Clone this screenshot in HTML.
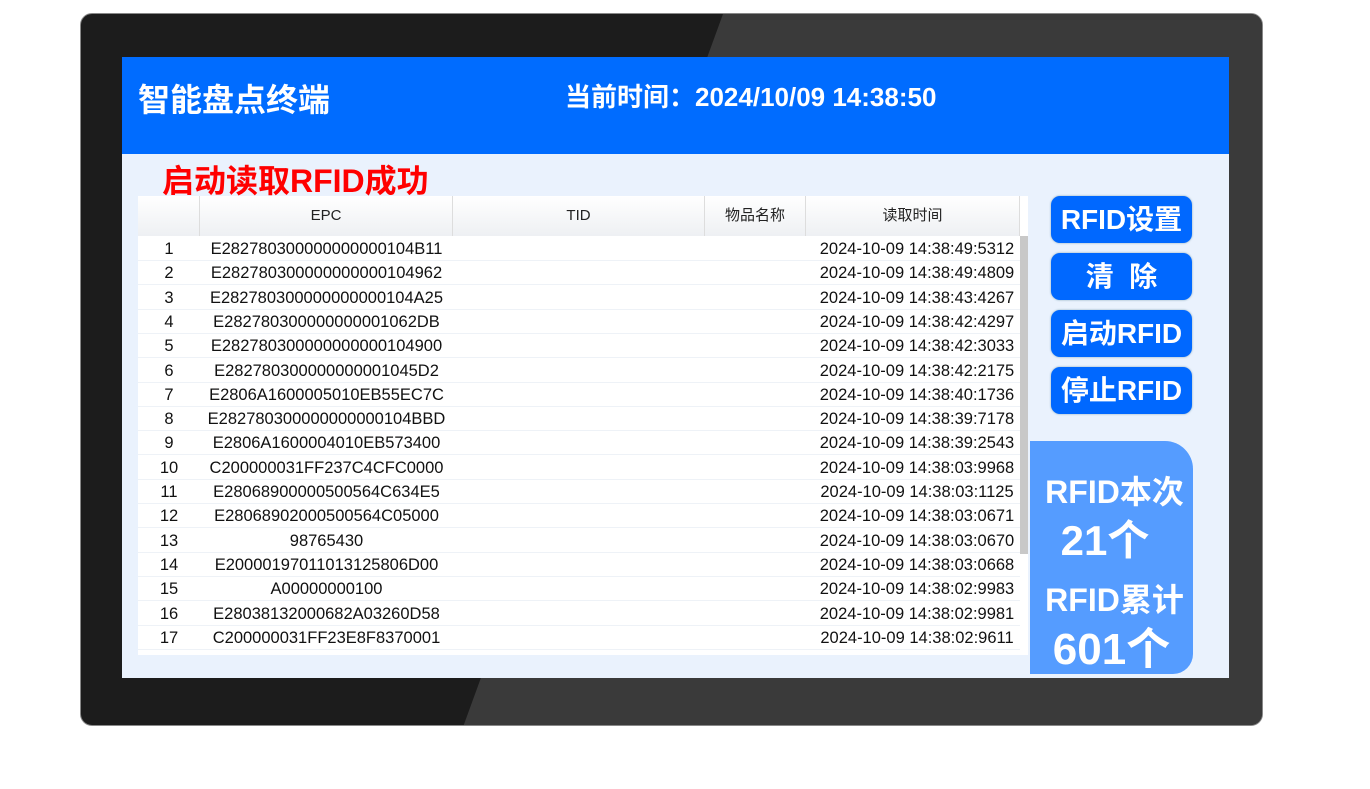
<!DOCTYPE html>
<html><head><meta charset="utf-8"><style>
*{margin:0;padding:0;box-sizing:border-box}
body{width:1370px;height:789px;background:#fff;position:relative;overflow:hidden;font-family:"Liberation Sans","Noto Sans CJK SC",sans-serif}
.bezel{position:absolute;left:80px;top:13px;width:1183px;height:713px;border-radius:12px;background:#1c1c1c;overflow:hidden;border:1px solid #888}
.glare{position:absolute;left:0;top:0;width:100%;height:100%;background:#3a3a3a;clip-path:polygon(642px 0,1183px 0,1183px 713px,382px 713px)}
.screen{position:absolute;left:122px;top:57px;width:1107px;height:621px;background:#eaf2fd}
.hdr{position:absolute;left:0;top:0;width:1107px;height:97px;background:#006cff;color:#fff;font-weight:bold}
.title{position:absolute;left:16px;top:18px;font-size:32px}
.time{position:absolute;left:443px;top:20px;font-size:26px}
.msg{position:absolute;left:40px;top:99px;font-size:32px;color:#f00;font-weight:bold}
.tbl{position:absolute;left:16px;top:139px;width:890px;height:459px;background:#fff}
.th{position:absolute;top:0;height:40px;background:linear-gradient(#fff,#eef0f3);border-right:1px solid #ddd;font-size:15px;text-align:center;line-height:40px;color:#222}
.row{position:absolute;left:0;width:882px;height:24px;border-bottom:1px solid #eef2f7;font-size:16.5px;color:#111}
.row span{position:absolute;top:0;line-height:24px;text-align:center}
.sb{position:absolute;left:882px;top:40px;width:8px;height:318px;background:#c8c8c8}
.btn{position:absolute;left:929px;width:141px;height:47px;background:#0068ff;border-radius:9px;color:#fff;font-weight:bold;font-size:28px;text-align:center;line-height:47px;box-shadow:0 0 2px #8ab}
.stat{position:absolute;left:908px;top:384px;width:163px;height:233px;background:#559cff;border-radius:0 28px 20px 0;color:#fff;font-weight:bold;text-align:center}
.stat div{position:absolute;left:0;width:163px;white-space:nowrap}
</style></head><body>
<div class="bezel"><div class="glare"></div></div>
<div class="screen">
<div class="hdr"><div class="title">智能盘点终端</div><div class="time">当前时间：2024/10/09 14:38:50</div></div>
<div class="msg">启动读取RFID成功</div>
<div class="tbl">
<div class="th" style="left:0;width:62px"></div>
<div class="th" style="left:62px;width:253px">EPC</div>
<div class="th" style="left:315px;width:252px">TID</div>
<div class="th" style="left:567px;width:101px">物品名称</div>
<div class="th" style="left:668px;width:214px">读取时间</div>
<div class="sb"></div>
<div id="rows"></div>
</div>
<div class="btn" style="top:139px">RFID设置</div>
<div class="btn" style="top:196px">清&nbsp;&nbsp;除</div>
<div class="btn" style="top:253px">启动RFID</div>
<div class="btn" style="top:310px">停止RFID</div>
<div class="stat">
<div style="top:26px;font-size:32px;padding-left:6px">RFID本次</div>
<div style="top:66px;font-size:42px;width:150px">21个</div>
<div style="top:134px;font-size:32px;padding-left:6px">RFID累计</div>
<div style="top:172px;font-size:44px">601个</div>
</div>
</div>
<script>
var d=[["E282780300000000000104B11","49:5312"],["E282780300000000000104962","49:4809"],["E282780300000000000104A25","43:4267"],["E282780300000000001062DB","42:4297"],["E282780300000000000104900","42:3033"],["E282780300000000001045D2","42:2175"],["E2806A1600005010EB55EC7C","40:1736"],["E282780300000000000104BBD","39:7178"],["E2806A1600004010EB573400","39:2543"],["C200000031FF237C4CFC0000","03:9968"],["E28068900000500564C634E5","03:1125"],["E28068902000500564C05000","03:0671"],["98765430","03:0670"],["E20000197011013125806D00","03:0668"],["A00000000100","02:9983"],["E28038132000682A03260D58","02:9981"],["C200000031FF23E8F8370001","02:9611"]];
var h="";d.forEach(function(r,i){h+='<div class="row" style="top:'+(41+i*24.3)+'px"><span style="left:0;width:62px">'+(i+1)+'</span><span style="left:62px;width:253px">'+r[0]+'</span><span style="left:668px;width:222px">2024-10-09 14:38:'+r[1]+'</span></div>'});
document.getElementById("rows").innerHTML=h;
</script>
</body></html>
